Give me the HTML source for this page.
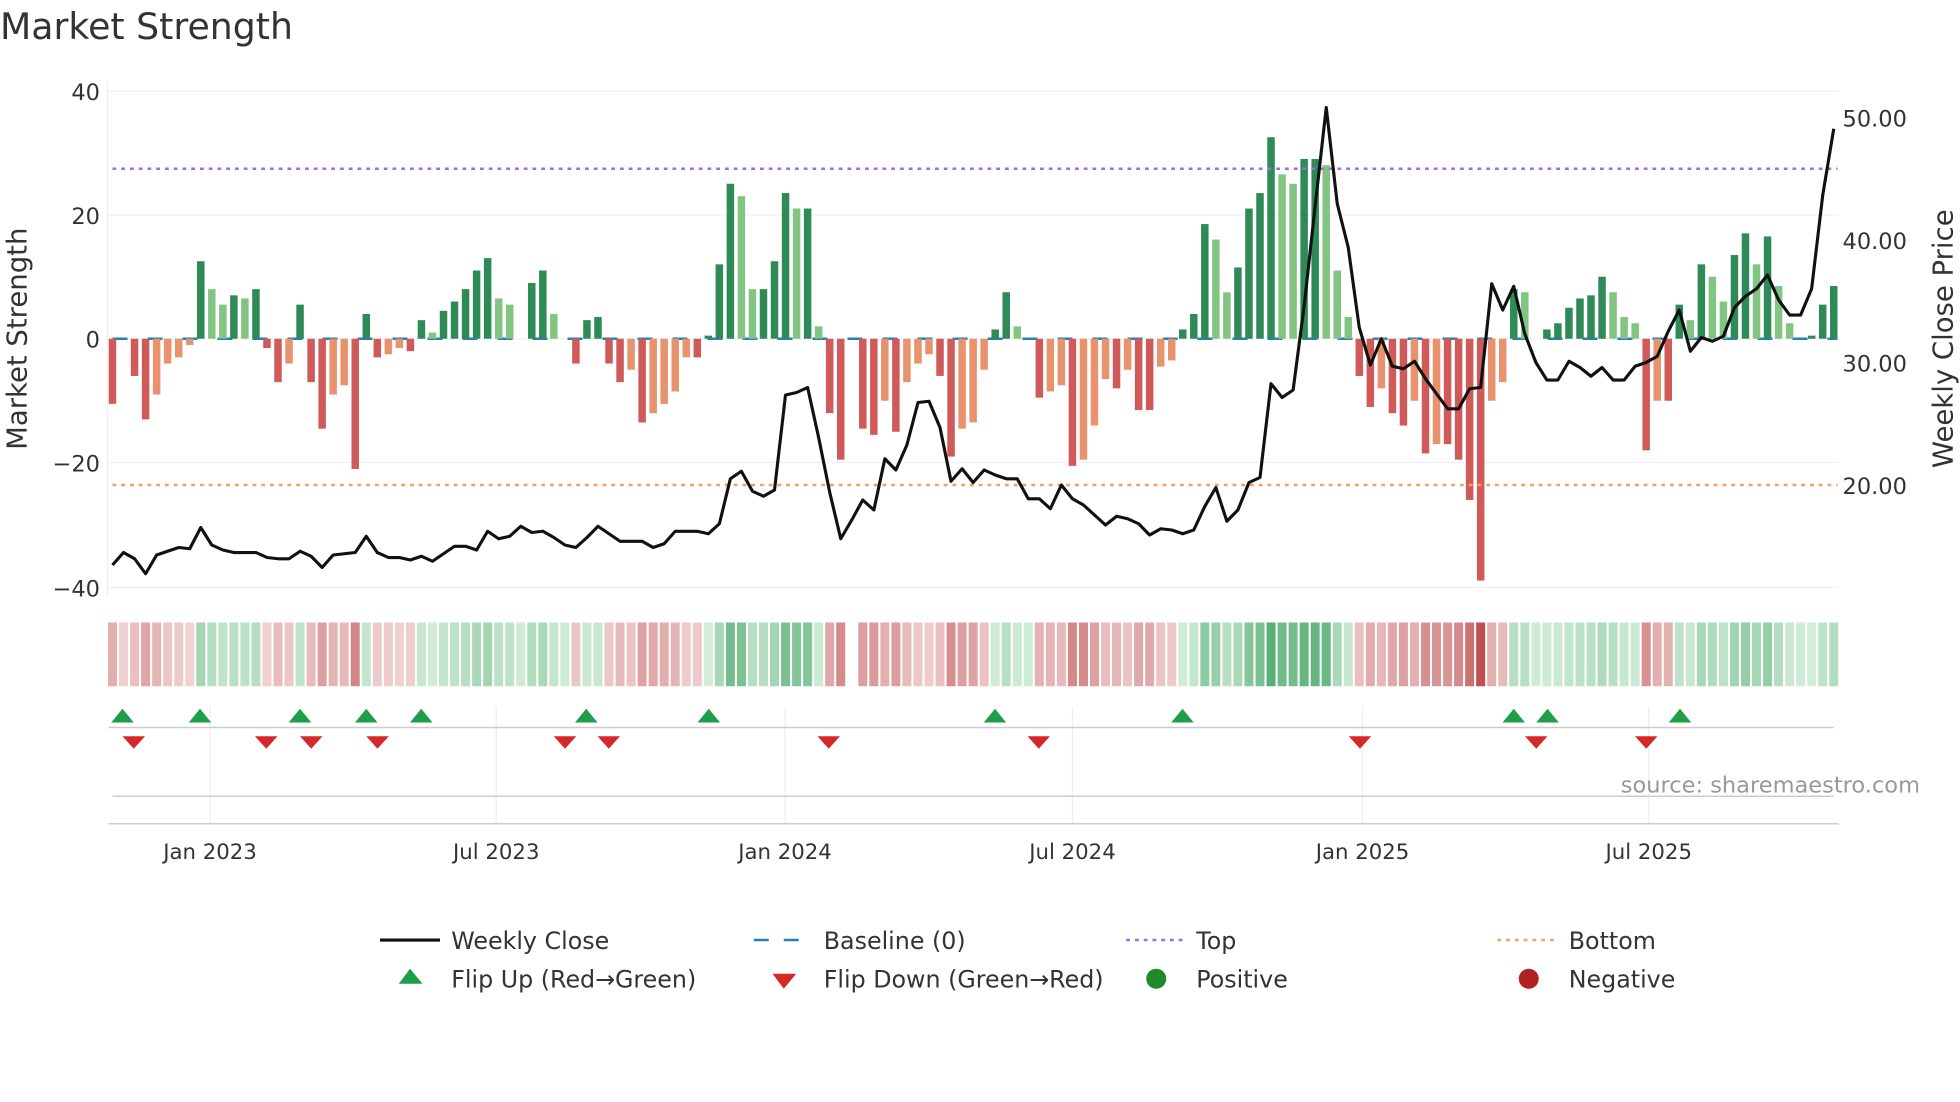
<!DOCTYPE html>
<html><head><meta charset="utf-8"><style>
html,body{margin:0;padding:0;background:#fff;}
svg{display:block;font-family:"DejaVu Sans","Liberation Sans",sans-serif;}
</style></head><body>
<svg id="s" width="1960" height="1102" viewBox="0 0 1568 881.6" xmlns="http://www.w3.org/2000/svg">
<text x="0" y="31" font-size="29" fill="#333">Market Strength</text>
<g stroke="#eef0f2" stroke-width="1">
<line x1="86" x2="1471" y1="73" y2="73"/><line x1="86" x2="1471" y1="172" y2="172"/>
<line x1="86" x2="1471" y1="271" y2="271"/><line x1="86" x2="1471" y1="370" y2="370"/>
<line x1="86" x2="1471" y1="470" y2="470"/>
<line x1="86" x2="86" y1="65" y2="478"/>
</g>
<g font-size="18" fill="#333" text-anchor="end">
<text x="80" y="80">40</text><text x="80" y="179">20</text><text x="80" y="278">0</text>
<text x="80" y="377">−20</text><text x="80" y="477">−40</text>
</g>
<g font-size="18" fill="#333">
<text x="1474" y="101">50.00</text><text x="1474" y="199">40.00</text>
<text x="1474" y="297">30.00</text><text x="1474" y="395">20.00</text>
</g>
<text transform="translate(21,271) rotate(-90)" font-size="22" fill="#333" text-anchor="middle">Market Strength</text>
<text transform="translate(1562,271) rotate(-90)" font-size="22" fill="#333" text-anchor="middle">Weekly Close Price</text>
<line x1="90" x2="1470" y1="271" y2="271" stroke="#2a7fb0" stroke-width="2" stroke-dasharray="12,16"/>
<g id="bars"></g>
<line x1="90" x2="1470" y1="135" y2="135" stroke="#a06ae0" stroke-width="2" stroke-dasharray="3,4"/>
<line x1="90" x2="1470" y1="388" y2="388" stroke="#f0a060" stroke-width="2" stroke-dasharray="3,4"/>
<polyline id="price" fill="none" stroke="#111" stroke-width="2.5" stroke-linejoin="round"/>
<g id="heat"></g>
<g stroke="#eceef0" stroke-width="1">
<line x1="168" x2="168" y1="565" y2="660"/><line x1="397" x2="397" y1="565" y2="660"/>
<line x1="628" x2="628" y1="565" y2="660"/><line x1="858" x2="858" y1="565" y2="660"/>
<line x1="1090" x2="1090" y1="565" y2="660"/><line x1="1319" x2="1319" y1="565" y2="660"/>
</g>
<line x1="87" x2="1467" y1="582" y2="582" stroke="#ccc" stroke-width="1.2"/>
<line x1="90" x2="1467" y1="637" y2="637" stroke="#ccc" stroke-width="1.2"/>
<line x1="87" x2="1471" y1="659" y2="659" stroke="#ccc" stroke-width="1.2"/>
<g id="marks"></g>
<text x="1536" y="634" font-size="18" fill="#999" text-anchor="end">source: sharemaestro.com</text>
<g font-size="17" fill="#333" text-anchor="middle">
<text x="168" y="687">Jan 2023</text><text x="397" y="687">Jul 2023</text>
<text x="628" y="687">Jan 2024</text><text x="858" y="687">Jul 2024</text>
<text x="1090" y="687">Jan 2025</text><text x="1319" y="687">Jul 2025</text>
</g>
<g font-size="19" fill="#333">
<line x1="304" x2="352" y1="752" y2="752" stroke="#111" stroke-width="2.5"/>
<text x="361" y="759">Weekly Close</text>
<line x1="603" x2="651" y1="752" y2="752" stroke="#2a7fb0" stroke-width="2" stroke-dasharray="12,12"/>
<text x="659" y="759">Baseline (0)</text>
<line x1="901" x2="949" y1="752" y2="752" stroke="#a06ae0" stroke-width="2" stroke-dasharray="3,4"/>
<text x="957" y="759">Top</text>
<line x1="1198" x2="1246" y1="752" y2="752" stroke="#f0a060" stroke-width="2" stroke-dasharray="3,4"/>
<text x="1255" y="759">Bottom</text>
<polygon points="328,775 319,787 338,787" fill="#1e9e48"/>
<text x="361" y="790">Flip Up (Red→Green)</text>
<polygon points="618,779 637,779 627,791" fill="#d62828"/>
<text x="659" y="790">Flip Down (Green→Red)</text>
<circle cx="925" cy="783" r="8" fill="#1f8a2a"/>
<text x="957" y="790">Positive</text>
<circle cx="1223" cy="783" r="8" fill="#b22222"/>
<text x="1255" y="790">Negative</text>
</g>
</svg>
<script>
var v=[-10.5,0,-6,-13,-9,-4,-3,-1,12.5,8,5.5,7,6.5,8,-1.5,-7,-4,5.5,-7,-14.5,-9,-7.5,-21,4,-3,-2.5,-1.5,-2,3,1,4.5,6,8,11,13,6.5,5.5,0,9,11,4,0,-4,3,3.5,-4,-7,-5,-13.5,-12,-10.5,-8.5,-3,-3,0.5,12,25,23,8,8,12.5,23.5,21,21,2,-12,-19.5,0,-14.5,-15.5,-10,-15,-7,-4,-2.5,-6,-19,-14.5,-13.5,-5,1.5,7.5,2,0,-9.5,-8.5,-7.5,-20.5,-19.5,-14,-6.5,-8,-5,-11.5,-11.5,-4.5,-3.5,1.5,4,18.5,16,7.5,11.5,21,23.5,32.5,26.5,25,29,29,28,11,3.5,-6,-11,-8,-12,-14,-10,-18.5,-17,-17,-19.5,-26,-39,-10,-7,8,7.5,0,1.5,2.5,5,6.5,7,10,7.5,3.5,2.5,-18,-10,-10,5.5,3,12,10,6,13.5,17,12,16.5,8.5,2.5,0,0.5,5.5,8.5];
var py=[452,442,447,459,444,441,438,439,422,436,440,442,442,442,446,447,447,441,445,454,444,443,442,429,442,446,446,448,445,449,443,437,437,440,425,431,429,421,426,425,430,436,438,430,421,427,433,433,433,438,435,425,425,425,427,419,383,377,393,397,392,316,314,310,350,394,431,416,400,408,367,376,356,322,321,342,385,375,386,376,380,383,383,399,399,407,388,399,404,412,420,413,415,419,428,423,424,427,424,405,390,417,408,386,382,307,318,312,245,165,86,163,198,262,292,271,293,295,289,303,315,327,327,311,310,227,248,229,267,290,304,304,289,294,301,294,304,304,293,290,285,265,248,281,270,273,269,246,237,231,220,240,252,252,231,156,103];
var NS="http://www.w3.org/2000/svg";
function el(t,a,p){var e=document.createElementNS(NS,t);for(var k in a)e.setAttribute(k,a[k]);document.getElementById(p).appendChild(e);}
var n=v.length,step=(1467-90)/(n-1);
for(var i=0;i<n;i++){
 var x=90+i*step,val=v[i],prev=i>0?v[i-1]:0,c;
 if(val>0)c=(val>=prev)?"#2e8b57":"#82c482";else c=(val<=prev)?"#d05a5a":"#e8926e";
 if(val!==0){var h=Math.abs(val)*4.96;el("rect",{x:x-3,y:val>0?271-h:271,width:6,height:h,fill:c},"bars");}
 var m=Math.min(Math.abs(val)/35,1),hc;
 var sv=val!==0?val:(prev!==0?prev:1);
 if(val===0)m=0.05;
 if(sv>0){var r=Math.round(212-(212-80)*m),g=Math.round(238-(238-170)*m),b=Math.round(218-(218-110)*m);hc="rgb("+r+","+g+","+b+")";}
 else {var r2=Math.round(242-(242-190)*m),g2=Math.round(214-(214-80)*m),b2=Math.round(214-(214-80)*m);hc="rgb("+r2+","+g2+","+b2+")";}
 if(i===67)continue;
 el("rect",{x:x-3.6,y:498,width:7.2,height:51,fill:hc},"heat");
}
var pts=[];for(var j=0;j<py.length;j++)pts.push((90+j*step).toFixed(1)+","+py[j]);
document.getElementById("price").setAttribute("points",pts.join(" "));
[98,160,240,293,337,469,567,796,946,1211,1238,1344].forEach(function(x){el("polygon",{points:(x)+",567 "+(x-9)+",578 "+(x+9)+",578",fill:"#1e9e48"},"marks");});
[107,213,249,302,452,487,663,831,1088,1229,1317].forEach(function(x){el("polygon",{points:(x-9)+",589 "+(x+9)+",589 "+x+",599",fill:"#d62828"},"marks");});
</script>
</body></html>
